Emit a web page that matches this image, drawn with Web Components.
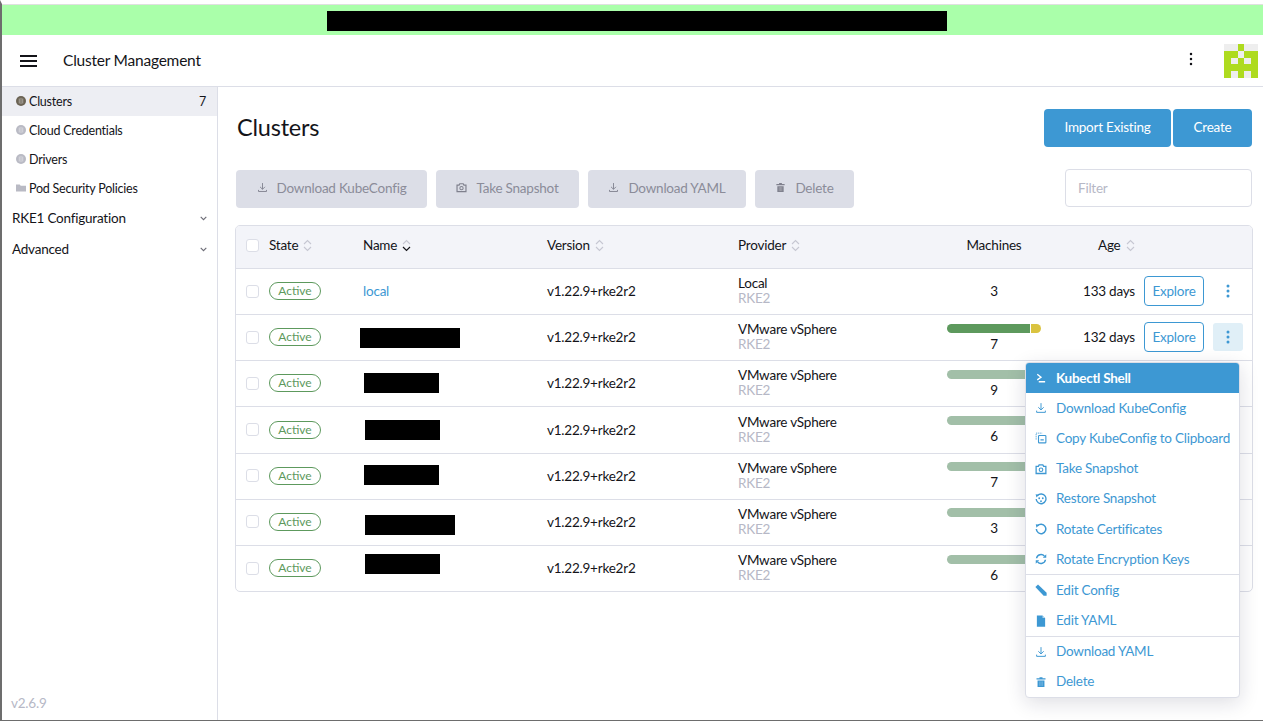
<!DOCTYPE html>
<html>
<head>
<meta charset="utf-8">
<title>Clusters</title>
<style>
html, body { margin: 0; padding: 0; height: 100%; overflow: hidden; background: #fff; }
/* the reference text runs a bit narrower than Lato does here */
body { font-family: Lato, "Liberation Sans", sans-serif; font-size: 13.5px; letter-spacing: -0.22px; color: #141419; }
</style>
</head>
<body>

<app-shell>
  <top-banner></top-banner>
  <app-header title="Cluster Management"></app-header>
  <div slot="side">
    <side-item icon="cluster" count="7" active>Clusters</side-item>
    <side-item icon="cluster">Cloud Credentials</side-item>
    <side-item icon="cluster">Drivers</side-item>
    <side-item icon="folder">Pod Security Policies</side-item>
    <side-group>RKE1 Configuration</side-group>
    <side-group>Advanced</side-group>
  </div>
  <clusters-page></clusters-page>
</app-shell>

<script>
const ICONS = {
  download: '<path d="M8 1.5v9M4.4 7 8 10.6 11.6 7M2.2 11.5v2.3h11.6v-2.3" fill="none" stroke="currentColor" stroke-width="1.3"/>',
  camera: '<path d="M1.5 4.5h3L5.5 2.6h5l1 1.9h3v9.5h-13z" fill="none" stroke="currentColor" stroke-width="1.7"/><circle cx="8" cy="9" r="2.4" fill="none" stroke="currentColor" stroke-width="1.5"/>',
  trash: '<path d="M6 1.5h4v1.4h4v1.8H2V2.900h4zM3.400 6h9.200v8.500H3.400z" fill="currentColor"/><path d="M6.200 7.200v6M8 7.200v6M9.800 7.200v6" stroke="#fff" stroke-opacity=".45" stroke-width=".7"/>',
  shell: '<path d="M3 3 8 7 3 10.500M5 13h8.500" fill="none" stroke="currentColor" stroke-width="1.800"/>',
  copy: '<path d="M1.500 10V1.500H10" fill="none" stroke="currentColor" stroke-width="1.200" stroke-dasharray="1.600 1.200"/><rect x="4.700" y="4.700" width="9.800" height="9.800" rx="1" fill="none" stroke="currentColor" stroke-width="1.500"/><path d="M7.300 10.500h4.400" stroke="currentColor" stroke-width="1.400"/>',
  restore: '<path d="M3.300 3.400A6.500 6.500 0 1 1 1.600 8" fill="none" stroke="currentColor" stroke-width="1.800"/><path d="M.8 1.600 5.400 2.400 2 6z" fill="currentColor"/><circle cx="5.600" cy="7" r="1.200" fill="currentColor"/><circle cx="10.400" cy="7" r="1.200" fill="currentColor"/><circle cx="8" cy="11" r="1.200" fill="currentColor"/>',
  rotate: '<path d="M3.300 3.800A6.300 6.300 0 1 1 1.800 8" fill="none" stroke="currentColor" stroke-width="2"/><path d="M1 1.800 5.600 2.400 2 6.200z" fill="currentColor"/>',
  sync: '<path d="M2.100 7A6 6 0 0 1 12.500 4M13.900 9A6 6 0 0 1 3.500 12" fill="none" stroke="currentColor" stroke-width="2"/><path d="M15 1.800V6.400H10.400zM1 14.200V9.600H5.600z" fill="currentColor"/>',
  pencil: '<path d="M.5 4 4 .5 15.500 11.500v4h-4z" fill="currentColor"/>',
  file: '<path d="M2.500 .5h7.500L13.500 4v11.500h-11z" fill="currentColor"/><path d="M10 .5V4h3.500z" fill="#fff" fill-opacity=".6"/>',
  cluster: '<circle cx="8" cy="8" r="8" fill="currentColor"/><path d="M5.200 4v8M8 3v10M10.800 4v8" stroke="#fff" stroke-opacity=".5" stroke-width="1.400"/>',
  folder: '<path d="M0 2.500h6l1.500 1.800H16V13.500H0z" fill="currentColor"/>'
};
function icon(name, size) {
  return `<svg width="${size}" height="${size}" viewBox="0 0 16 16" aria-hidden="true">${ICONS[name]}</svg>`;
}
const SORT = `<svg class="sort" width="9" height="13" viewBox="0 0 9 13"><path d="M1 5 4.500 1.600 8 5M1 8l3.500 3.400L8 8" fill="none" stroke="#c6c7d2" stroke-width="1.100"/></svg>`;
const SORT_DOWN = `<svg class="sort" width="9" height="13" viewBox="0 0 9 13"><path d="M1 5 4.500 1.600 8 5" fill="none" stroke="#c6c7d2" stroke-width="1.100"/><path d="M1 8l3.500 3.400L8 8" fill="none" stroke="#141419" stroke-width="1.200"/></svg>`;
const DOTS = (c, r = 1.5) => `<svg width="4" height="14" viewBox="0 0 4 14"><circle cx="2" cy="2" r="${r}" fill="${c}"/><circle cx="2" cy="7" r="${r}" fill="${c}"/><circle cx="2" cy="12" r="${r}" fill="${c}"/></svg>`;

class AppShell extends HTMLElement {
  constructor() {
    super();
    this.attachShadow({mode: "open"}).innerHTML = `
    <style>
      :host { display: flex; flex-direction: column; box-sizing: border-box; width: 1263px; height: 721px;
              border-left: 2px solid #6d6d6d; border-bottom: 1px solid #6d6d6d; border-top: 4px solid #fff; }
      .body { flex: 1; display: flex; min-height: 0; }
      aside { width: 215px; flex: none; border-right: 1px solid #dcdee7; position: relative; }
      main { flex: 1; min-width: 0; position: relative; }
      .ver { position: absolute; left: 9px; bottom: 9px; font-size: 13.5px; color: #b6b8c6; }
    </style>
    <slot></slot>
    <div class="body">
      <aside><slot name="side"></slot><div class="ver">v2.6.9</div></aside>
      <main><slot name="page"></slot></main>
    </div>`;
  }
  connectedCallback() {
    const page = this.querySelector("clusters-page");
    if (page) page.slot = "page";
  }
}
customElements.define("app-shell", AppShell);

class TopBanner extends HTMLElement {
  constructor() {
    super();
    this.attachShadow({mode: "open"}).innerHTML = `
    <style>
      :host { display: flex; box-sizing: border-box; height: 31px; background: #aaffaa; border-top: 1px solid #e0e0e0; padding: 6px 0 0 325px; }
      div { width: 620px; height: 20px; background: #000; }
    </style>
    <div></div>`;
  }
}
customElements.define("top-banner", TopBanner);

class AppHeader extends HTMLElement {
  constructor() {
    super();
    this.attachShadow({mode: "open"}).innerHTML = `
    <style>
      :host { display: flex; align-items: center; box-sizing: border-box; height: 52px; border-bottom: 1px solid #dcdee7; padding-left: 18px; }
      .burger { width: 16.5px; height: 12px; margin-right: 26.5px; border-top: 2px solid #141419; border-bottom: 2px solid #141419; position: relative; box-sizing: border-box; }
      .burger::after { content: ""; position: absolute; left: 0; right: 0; top: 3px; height: 2px; background: #141419; }
      .title { font-size: 15.5px; flex: 1; color: #141419; padding-bottom: 2px; }
      .more { margin-right: 31px; display: flex; padding-bottom: 3px; }
      .logo { margin-right: 5px; margin-top: 1px; display: block; }
    </style>
    <div class="burger"></div>
    <div class="title">${this.getAttribute("title")}</div>
    <div class="more">${DOTS("#141419", 1.25)}</div>
    <svg class="logo" width="34" height="34" viewBox="0 0 5 5" shape-rendering="crispEdges">
      <rect width="5" height="5" fill="#aedb1f"/>
      <path d="M0 0h2v1H0zM3 0h2v1H3zM2 1h1v1H2zM1 2h1v1H1zM3 2h1v1H3zM1 4h1v1H1zM3 4h1v1H3z" fill="#eeeeee"/>
    </svg>`;
  }
}
customElements.define("app-header", AppHeader);

class SideItem extends HTMLElement {
  constructor() {
    super();
    this.attachShadow({mode: "open"});
  }
  connectedCallback() {
    const active = this.hasAttribute("active");
    const count = this.getAttribute("count");
    this.shadowRoot.innerHTML = `
    <style>
      :host { display: flex; align-items: center; height: 29px; padding: 0 11px 0 14px; font-size: 12.5px;
              background: ${active ? "#edeef3" : "transparent"}; color: #141419; }
      svg { flex: none; margin: 0 3px 2px 0; color: ${active ? "#6a6253" : "#b9bac4"}; }
      .t { flex: 1; }
    </style>
    ${icon(this.getAttribute("icon"), 10)}
    <span class="t"><slot></slot></span>
    ${count ? `<span>${count}</span>` : ""}`;
  }
}
customElements.define("side-item", SideItem);

class SideGroup extends HTMLElement {
  constructor() {
    super();
    this.attachShadow({mode: "open"}).innerHTML = `
    <style>
      :host { display: flex; align-items: center; justify-content: space-between; height: 31px; padding: 0 10px 0 10px; font-size: 13.5px; color: #141419; }
      span { padding-bottom: 2px; }
    </style>
    <span><slot></slot></span>
    <svg width="7" height="5" viewBox="0 0 7 5"><path d="M.7.9 3.500 3.700 6.300.9" fill="none" stroke="#6c6c76" stroke-width="1.100"/></svg>`;
  }
}
customElements.define("side-group", SideGroup);

class UiButton extends HTMLElement {
  constructor() {
    super();
    this.attachShadow({mode: "open"});
  }
  connectedCallback() {
    const ic = this.getAttribute("icon");
    this.shadowRoot.innerHTML = `
    <style>
      :host { display: inline-flex; align-items: center; justify-content: center; box-sizing: border-box; height: 38px; border-radius: 4px; font-size: 13.5px; white-space: nowrap; }
      :host([kind=primary]) { background: #3d98d3; color: #fff; }
      :host([kind=muted]) { background: #dcdee7; color: #8b8c99; }
      svg { margin: 0 9px 3px 0; color: #7f808d; }
      span { padding-bottom: 3px; }
    </style>
    ${ic ? icon(ic, 11) : ""}<span><slot></slot></span>`;
  }
}
customElements.define("ui-button", UiButton);

class ClusterRow extends HTMLElement {
  constructor() {
    super();
    this.attachShadow({mode: "open"});
  }
  connectedCallback() {
    const a = n => this.getAttribute(n);
    const redact = a("redact");
    let nameCell = `<a>${a("name") || ""}</a>`;
    if (redact) {
      const [off, w, dy] = redact.split(",").map(Number);
      nameCell = `<span class="redact" style="margin-left:${off}px;width:${w}px;margin-top:${dy}px"></span>`;
    }
    const m = a("machines");
    const bar = a("bar");
    this.shadowRoot.innerHTML = `
    <style>
      :host { display: grid; grid-template-columns: 33px 94px 184px 191px 200px 112px 85px 9px 60px 1fr; align-items: center;
              box-sizing: border-box; height: 46.17px; border-top: 1px solid #dcdee7; padding-bottom: 1px; font-size: 13.5px; color: #141419; }
      .cb { width: 13px; height: 13px; margin-left: 10px; border: 1px solid #dcdee7; border-radius: 3px; background: #fff; box-sizing: border-box; }
      .badge { display: block; box-sizing: border-box; width: 52px; height: 18px; line-height: 15px; text-align: center; font-size: 12px; letter-spacing: 0;
               border: 1px solid #5d995d; border-radius: 9px; color: #5d995d; }
      a { color: #3d98d3; }
      .redact { display: block; height: 20px; background: #000; }
      .prov { line-height: 15px; }
      .prov small { display: block; font-size: 13.5px; color: #b6b8c6; }
      .mach { text-align: center; display: flex; flex-direction: column; align-items: center; line-height: 17px; }
      .bar { display: flex; width: 94px; height: 9px; border-radius: 5px; overflow: hidden; margin: 2px 0 3px; background: #a2bfa8; }
      .bar i { display: block; height: 100%; }
      .age { text-align: right; white-space: nowrap; }
      .explore { grid-column: 9; box-sizing: border-box; height: 30px; line-height: 28px; text-align: center; border: 1px solid #3d98d3; border-radius: 4px; color: #3d98d3; }
      .act { justify-self: start; margin-left: 9px; width: 30px; height: 28px; border-radius: 3px; display: flex; align-items: center; justify-content: center; }
      .act.on { background: #e0eff7; }
    </style>
    <div class="cb"></div>
    <div><span class="badge">Active</span></div>
    <div>${nameCell}</div>
    <div>v1.22.9+rke2r2</div>
    <div class="prov">${a("provider")}<small>RKE2</small></div>
    <div class="mach">${bar === "live" ? '<div class="bar" style="background:#fff"><i style="width:83px;background:#5d995d"></i><i style="width:1px"></i><i style="width:10px;background:#dac33f"></i></div>' : bar ? '<div class="bar"></div>' : ""}<span>${m}</span></div>
    <div class="age">${a("age") || ""}</div>
    ${a("age") ? '<div class="explore">Explore</div>' : ""}
    ${a("age") ? `<div class="act ${this.hasAttribute("open") ? "on" : ""}">${DOTS("#3d98d3")}</div>` : ""}`;
  }
}
customElements.define("cluster-row", ClusterRow);

class ActionMenu extends HTMLElement {
  constructor() {
    super();
    const item = (ic, label, hi) => `<div class="i ${hi ? "hi" : ""}">${icon(ic, 12)}<span>${label}</span></div>`;
    this.attachShadow({mode: "open"}).innerHTML = `
    <style>
      :host { display: block; position: absolute; left: 807px; top: 275px; width: 215px; box-sizing: border-box; background: #fff;
              border: 1px solid #dcdee7; border-radius: 4px; overflow: hidden; box-shadow: 0 5px 20px rgba(20,20,60,.14); font-size: 13.5px; color: #3d98d3; }
      .i { display: flex; align-items: center; height: 30.2px; padding-left: 9px; white-space: nowrap; }
      .i svg { flex: none; margin-right: 9px; }
      .i span { padding-bottom: 1px; }
      .hi { background: #3d98d3; color: #fff; font-weight: 700; letter-spacing: -0.3px; }
      hr { margin: 0; border: 0; border-top: 1px solid #dcdee7; }
    </style>
    ${item("shell", "Kubectl Shell", true)}
    ${item("download", "Download KubeConfig")}
    ${item("copy", "Copy KubeConfig to Clipboard")}
    ${item("camera", "Take Snapshot")}
    ${item("restore", "Restore Snapshot")}
    ${item("rotate", "Rotate Certificates")}
    ${item("sync", "Rotate Encryption Keys")}
    <hr>
    ${item("pencil", "Edit Config")}
    ${item("file", "Edit YAML")}
    <hr>
    ${item("download", "Download YAML")}
    ${item("trash", "Delete")}`;
  }
}
customElements.define("action-menu", ActionMenu);

class ClustersPage extends HTMLElement {
  constructor() {
    super();
    this.attachShadow({mode: "open"}).innerHTML = `
    <style>
      :host { display: block; padding: 22px 11px 0 17px; }
      .top { display: flex; align-items: center; height: 38px; }
      h1 { flex: 1; margin: 0 0 0 2px; padding-bottom: 2px; font-size: 23.5px; font-weight: 400; color: #141419; }
      .top ui-button + ui-button { margin-left: 2px; }
      .bulk { display: flex; align-items: flex-start; gap: 9px; margin-top: 23px; margin-left: 1px; }
      .filter { margin-left: auto; box-sizing: border-box; width: 187px; height: 38px; margin-top: -1px; border: 1px solid #dcdee7; border-radius: 4px;
                padding: 0 12px; line-height: 36px; color: #b6b8c6; font-size: 13.5px; }
      .table { margin: 17px -1px 0 0; border: 1px solid #dcdee7; border-radius: 5px; }
      .head { display: grid; grid-template-columns: 33px 94px 184px 191px 200px 112px 1fr; align-items: center; box-sizing: border-box; height: 42px; padding-bottom: 4px; background: #f3f4f9;
              border-radius: 4px 4px 0 0; font-size: 13.5px; color: #141419; }
      .head span { display: inline-flex; align-items: center; gap: 5px; }
      .cb { width: 13px; height: 13px; margin-left: 10px; border: 1px solid #dcdee7; border-radius: 3px; background: #fff; box-sizing: border-box; }
      .mach { justify-self: center; }
      .age { padding-left: 48px; }
    </style>
    <div class="top">
      <h1>Clusters</h1>
      <ui-button kind="primary" style="width:127px">Import Existing</ui-button>
      <ui-button kind="primary" style="width:79px">Create</ui-button>
    </div>
    <div class="bulk">
      <ui-button kind="muted" icon="download" style="width:191px">Download KubeConfig</ui-button>
      <ui-button kind="muted" icon="camera" style="width:143px">Take Snapshot</ui-button>
      <ui-button kind="muted" icon="download" style="width:158px">Download YAML</ui-button>
      <ui-button kind="muted" icon="trash" style="width:99px">Delete</ui-button>
      <div class="filter">Filter</div>
    </div>
    <div class="table">
      <div class="head">
        <div class="cb"></div>
        <span>State ${SORT}</span>
        <span>Name ${SORT_DOWN}</span>
        <span>Version ${SORT}</span>
        <span>Provider ${SORT}</span>
        <span class="mach">Machines</span>
        <span class="age">Age ${SORT}</span>
      </div>
      <cluster-row name="local" provider="Local" machines="3" age="133 days"></cluster-row>
      <cluster-row redact="-3,100,2" provider="VMware vSphere" machines="7" bar="live" age="132 days" open></cluster-row>
      <cluster-row redact="1,75,0" provider="VMware vSphere" machines="9" bar="1"></cluster-row>
      <cluster-row redact="2,75,0" provider="VMware vSphere" machines="6" bar="1"></cluster-row>
      <cluster-row redact="1,75,-2" provider="VMware vSphere" machines="7" bar="1"></cluster-row>
      <cluster-row redact="2,90,6" provider="VMware vSphere" machines="3" bar="1"></cluster-row>
      <cluster-row redact="2,75,-8" provider="VMware vSphere" machines="6" bar="1"></cluster-row>
    </div>
    <action-menu></action-menu>`;
  }
}
customElements.define("clusters-page", ClustersPage);
</script>
</body>
</html>
